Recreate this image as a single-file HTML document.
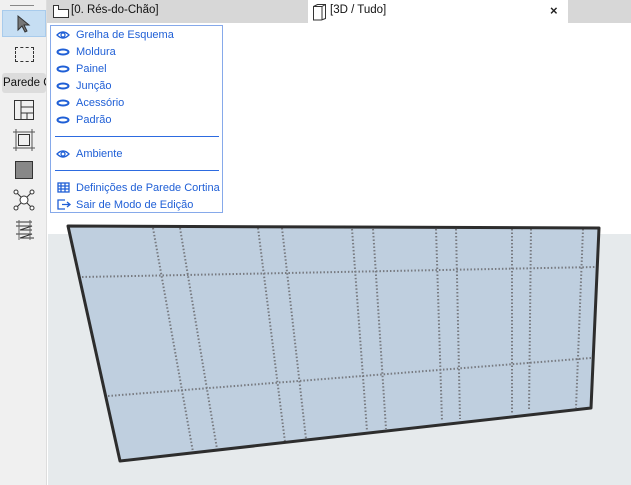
<!DOCTYPE html>
<html><head><meta charset="utf-8"><style>
*{margin:0;padding:0;box-sizing:border-box}
body{width:631px;height:485px;overflow:hidden;position:relative;background:#fff;font-family:"Segoe UI","Liberation Sans",sans-serif;font-size:11px}
.a{position:absolute}
.mi{position:absolute;left:26px;color:#1f5fd6;font-size:11px;line-height:14px}
</style></head><body>
<div class="a" style="left:0;top:0;width:47px;height:485px;background:#f0f0f0;border-right:1px solid #ddd"></div>
<div class="a" style="left:10px;top:5px;width:24px;height:1px;background:#888"></div>
<div class="a" style="left:2px;top:10px;width:44px;height:27px;background:#c6def3;border:1px solid #a8cbec"></div>
<svg class="a" style="left:15px;top:14px" width="16" height="20"><path d="M3 2 L3 16 L7 12 L10 18 L12 17 L9 11 L14 11 Z" fill="#777" stroke="#333" stroke-width="1"/></svg>
<div class="a" style="left:15px;top:47px;width:19px;height:15px;border:1px dashed #333"></div>
<div class="a" style="left:2px;top:73px;width:44px;height:20px;background:#dcdcdc;border-radius:3px;font-size:11.5px;line-height:20px;padding-left:1px;color:#111;overflow:hidden;white-space:nowrap">Parede C</div>
<svg class="a" style="left:13px;top:99px" width="22" height="22"><rect x="1.5" y="1.5" width="19" height="19" fill="none" stroke="#333"/><path d="M8 1.5V20.5M8 8H20.5M8 14H20.5M14 14V20.5" stroke="#333" fill="none"/></svg>
<svg class="a" style="left:13px;top:129px" width="22" height="22"><path d="M0 3H22M0 19H22M3 0V22M19 0V22" stroke="#555"/><rect x="5.5" y="5.5" width="11" height="11" fill="none" stroke="#333"/></svg>
<svg class="a" style="left:13px;top:159px" width="22" height="22"><rect x="2.5" y="2.5" width="17" height="17" fill="#888" stroke="#333"/></svg>
<svg class="a" style="left:13px;top:189px" width="22" height="22"><path d="M4 4L18 18M18 4L4 18" stroke="#333"/><circle cx="11" cy="11" r="4" fill="#fff" stroke="#333"/><circle cx="3" cy="3" r="2" fill="#fff" stroke="#333"/><circle cx="19" cy="3" r="2" fill="#fff" stroke="#333"/><circle cx="3" cy="19" r="2" fill="#fff" stroke="#333"/><circle cx="19" cy="19" r="2" fill="#fff" stroke="#333"/></svg>
<svg class="a" style="left:14px;top:219px" width="22" height="22"><path d="M2 3H18M2 7H18L6 11H18M2 15H18L6 19H20" stroke="#333" fill="none"/><path d="M5 1V21M16 1V21" stroke="#666"/></svg>
<div class="a" style="left:47px;top:0;width:584px;height:23px;background:#d7d7d7"></div>
<svg class="a" style="left:52px;top:4px" width="18" height="15"><path d="M1.5 13.5V1.5H6.5V5.5H16.5V13.5Z" fill="#fff" stroke="#333"/></svg>
<div class="a" style="left:71px;top:4px;font-size:11.5px;color:#111">[0. Rés-do-Chão]</div>
<div class="a" style="left:308px;top:0;width:260px;height:23px;background:#fff"></div>
<svg class="a" style="left:312px;top:3px" width="17" height="18"><path d="M1.5 3.5L5.5 1.5H13.5V15.5L9.5 17H1.5Z M10 3.5L13.5 1.5M10 3.5V17M1.5 3.5H10" fill="none" stroke="#333"/></svg>
<div class="a" style="left:330px;top:4px;font-size:11.5px;color:#111">[3D / Tudo]</div>
<div class="a" style="left:550px;top:3px;font-size:13px;font-weight:bold;color:#222">×</div>
<div class="a" style="left:48px;top:234px;width:583px;height:251px;background:#e6eaec"></div>
<svg class="a" style="left:0;top:0" width="631" height="485">
<polygon points="68,226 599,228 591,408 120,461" fill="#bfcfdf"/>
<g stroke="#777a80" stroke-width="2" stroke-dasharray="1.5,2" fill="none">
<path d="M153,228 L193,452 M180,228 L217,449 M258,228 L285,442 M282,228 L306,439 M352,229 L367,431 M373,229 L386,429 M436,229 L442,421 M456,229 L460,419 M512,229 L512,413 M531,229 L529,411 M583,229 L576,408"/>
<path d="M82,277 L596,267 M108,396 L591,358"/>
</g>
<polygon points="68,226 599,228 591,408 120,461" fill="none" stroke="#2d2d2d" stroke-width="3" stroke-linejoin="round"/>
</svg>
<div class="a" style="left:50px;top:25px;width:173px;height:188px;background:#fff;border:1px solid #86a9ea">
<div class="a" style="left:4px;top:110px;width:164px;height:1px;background:#2d6be0"></div>
<div class="a" style="left:4px;top:144px;width:164px;height:1px;background:#2d6be0"></div>
</div>
<svg class="a" style="left:55px;top:28px" width="20" height="185">
<g fill="none" stroke="#1f5fd6" stroke-width="1.3">
<path d="M2 7Q8 1 14 7Q8 13 2 7Z"/><circle cx="8" cy="7" r="2"/>
<ellipse cx="8" cy="24" rx="5.5" ry="2.5" stroke-width="2"/>
<ellipse cx="8" cy="41" rx="5.5" ry="2.5" stroke-width="2"/>
<ellipse cx="8" cy="58" rx="5.5" ry="2.5" stroke-width="2"/>
<ellipse cx="8" cy="75" rx="5.5" ry="2.5" stroke-width="2"/>
<ellipse cx="8" cy="92" rx="5.5" ry="2.5" stroke-width="2"/>
<path d="M2 126Q8 120 14 126Q8 132 2 126Z"/><circle cx="8" cy="126" r="2"/>
<rect x="3" y="155" width="11" height="9"/><path d="M3 158H14M3 161H14M6 155V164M10 155V164"/>
<path d="M10 172H3V181H10M7 176.5H15M12 174L15 176.5L12 179"/>
</g></svg>
<div class="mi" style="left:76px;top:28px">Grelha de Esquema</div>
<div class="mi" style="left:76px;top:45px">Moldura</div>
<div class="mi" style="left:76px;top:62px">Painel</div>
<div class="mi" style="left:76px;top:79px">Junção</div>
<div class="mi" style="left:76px;top:96px">Acessório</div>
<div class="mi" style="left:76px;top:113px">Padrão</div>
<div class="mi" style="left:76px;top:147px">Ambiente</div>
<div class="mi" style="left:76px;top:181px">Definições de Parede Cortina</div>
<div class="mi" style="left:76px;top:198px">Sair de Modo de Edição</div>
</body></html>
